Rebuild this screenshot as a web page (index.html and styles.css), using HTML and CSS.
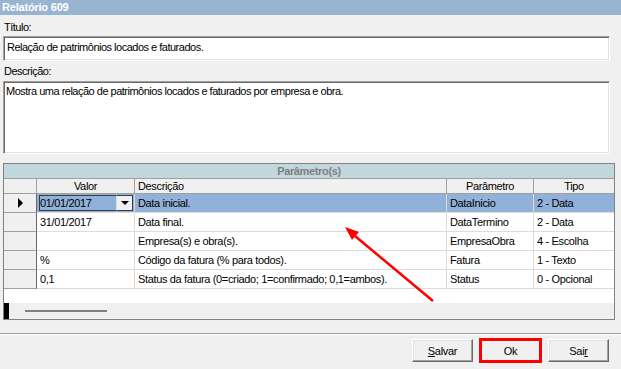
FILE: index.html
```html
<!DOCTYPE HTML>
<html>

    <head>
        <meta name="viewport" content="width=device-width, initial-scale=1">
        <title>Relatório 609</title>
        <link rel="stylesheet" href="styles.css">
    </head>

    <body>
        <div class="titlebar">Relatório 609</div>

        <div class="content">
            <div class="label">Título:</div>
            <div class="field single">Relação de patrimônios locados e faturados.</div>

            <div class="label second">Descrição:</div>
            <div class="field multi">Mostra uma relação de patrimônios locados e faturados por empresa e obra.</div>

            <div class="grid">
                <div class="band">Parâmetro(s)</div>
                <div class="row head">
                    <div class="cell ind"></div>
                    <div class="cell center">Valor</div>
                    <div class="cell">Descrição</div>
                    <div class="cell center">Parâmetro</div>
                    <div class="cell center">Tipo</div>
                </div>
                <div class="row selected">
                    <div class="cell ind"><span class="pointer"></span></div>
                    <div class="cell editor">
                        <span class="edit-text">01/01/2017</span>
                        <span class="drop"><span class="caret"></span></span>
                    </div>
                    <div class="cell">Data inicial.</div>
                    <div class="cell">DataInicio</div>
                    <div class="cell">2 - Data</div>
                </div>
                <div class="row">
                    <div class="cell ind"></div>
                    <div class="cell">31/01/2017</div>
                    <div class="cell">Data final.</div>
                    <div class="cell">DataTermino</div>
                    <div class="cell">2 - Data</div>
                </div>
                <div class="row">
                    <div class="cell ind"></div>
                    <div class="cell"></div>
                    <div class="cell">Empresa(s) e obra(s).</div>
                    <div class="cell">EmpresaObra</div>
                    <div class="cell">4 - Escolha</div>
                </div>
                <div class="row">
                    <div class="cell ind"></div>
                    <div class="cell">%</div>
                    <div class="cell">Código da fatura (% para todos).</div>
                    <div class="cell">Fatura</div>
                    <div class="cell">1 - Texto</div>
                </div>
                <div class="row">
                    <div class="cell ind"></div>
                    <div class="cell">0,1</div>
                    <div class="cell">Status da fatura (0=criado; 1=confirmado; 0,1=ambos).</div>
                    <div class="cell">Status</div>
                    <div class="cell">0 - Opcional</div>
                </div>
                <div class="blank"></div>
                <div class="hscroll">
                    <span class="mark"></span>
                    <span class="thumb"></span>
                </div>
            </div>
        </div>

        <div class="sep"></div>

        <div class="actions">
            <button class="button"><u>S</u>alvar</button>
            <button class="button ok">Ok</button>
            <button class="button">Sai<u>r</u></button>
        </div>

        <!-- annotation arrow drawn over the grid -->
        <svg class="arrow" width="621" height="369" viewBox="0 0 621 369">
            <line x1="433" y1="301" x2="355" y2="236" stroke="#f00" stroke-width="2.5" />
            <polygon points="345,227 359,232 352,240" fill="#f00" />
        </svg>
    </body>

</html>
```

FILE: styles.css
```css
html {
    font-family: "Liberation Sans", Arial, sans-serif;
    font-size: 11px;
}

body {
    margin: 0;
    width: 621px;
    height: 369px;
    background: #f0f0f0;
    color: #000;
    overflow: hidden;
    position: relative;
    letter-spacing: -0.5px;
}

.titlebar {
    height: 15px;
    line-height: 15px;
    background: #99b4d1;
    color: white;
    font-weight: bold;
    padding-left: 2px;
    letter-spacing: -0.2px;
}

.content {
    padding: 0 11px 0 3px;
}

.label {
    margin-top: 6px;
    height: 13px;
    line-height: 13px;
    padding-left: 1px;
}

.label.second {
    margin-top: 4px;
}

.field {
    margin-top: 2px;
    background: white;
    box-sizing: border-box;
    border: 1px solid;
    border-color: #a0a0a0 #fff #fff #a0a0a0;
    box-shadow: inset 1px 1px #696969, inset -1px -1px #e3e3e3;
}

.field.single {
    height: 25px;
    line-height: 17px;
    padding: 2px 3px;
}

.field.multi {
    margin-top: 3px;
    height: 73px;
    line-height: 13px;
    padding: 3px 2px;
}

.grid {
    margin-top: 9px;
    margin-right: -5px;
    border: 1px solid #828282;
    background: white;
    letter-spacing: -0.35px;
}

.band {
    height: 14px;
    line-height: 14px;
    background: #c2d6de;
    color: #808080;
    font-weight: bold;
    text-align: center;
    border-bottom: 1px solid #a0a0a0;
}

.row {
    display: grid;
    grid-template-columns: 33px 98px 312px 87px 1fr;
    height: 19px;
}

.cell {
    box-sizing: border-box;
    border-right: 1px solid #dcdcdc;
    border-bottom: 1px solid #dcdcdc;
    padding: 0 3px;
    line-height: 18px;
    white-space: nowrap;
    overflow: hidden;
}

.cell:last-child {
    border-right: none;
}

.cell.center {
    text-align: center;
}

.row.head {
    height: 15px;
}

.row.head .cell {
    background: #f0f0f0;
    line-height: 14px;
    border-right-color: #a0a0a0;
    border-bottom-color: #a0a0a0;
}

.cell.ind {
    background: #f0f0f0;
    border-right: 1px solid #696969;
    border-bottom: 1px solid #a0a0a0;
    display: flex;
    align-items: center;
    justify-content: center;
}

.row:last-of-type .cell.ind {
    border-bottom-color: #696969;
}

.pointer {
    width: 0;
    height: 0;
    border-top: 5px solid transparent;
    border-bottom: 5px solid transparent;
    border-left: 5px solid #000;
    margin-left: 1px;
}

.row.selected .cell {
    background: #91b1d8;
}

.row.selected .cell.ind {
    background: #f0f0f0;
}

.cell.editor {
    padding: 1px 1px 1px 2px;
    display: flex;
    align-items: stretch;
}

.edit-text {
    flex: 1;
    border: 1px solid #3c3c3c;
    border-right: none;
    line-height: 15px;
    padding-left: 0;
}

.drop {
    width: 15px;
    background: #f0f0f0;
    border: 1px solid #3c3c3c;
    border-left: 1px solid #dcdcdc;
    display: flex;
    align-items: center;
    justify-content: center;
}

.caret {
    width: 0;
    height: 0;
    border-left: 4px solid transparent;
    border-right: 4px solid transparent;
    border-top: 4px solid #000;
}

.blank {
    height: 14px;
}

.hscroll {
    height: 16px;
    background: #f0f0f0;
    display: flex;
    align-items: center;
}

.mark {
    width: 5px;
    height: 16px;
    background: #000;
}

.thumb {
    width: 82px;
    height: 2px;
    margin-left: 16px;
    background: #808080;
}

.sep {
    margin-top: 13px;
    border-top: 1px solid #a0a0a0;
    border-bottom: 1px solid #fff;
}

.actions {
    display: flex;
    justify-content: flex-end;
    gap: 7px;
    padding-right: 12px;
    margin-top: 4px;
}

.button {
    width: 61px;
    height: 23px;
    padding: 0;
    font-family: inherit;
    font-size: 11px;
    letter-spacing: -0.3px;
    color: #000;
    background: #f0f0f0;
    border: 1px solid;
    border-color: #fff #696969 #696969 #fff;
    box-shadow: inset -1px -1px #a0a0a0, inset 1px 1px #e3e3e3;
}

.button.ok {
    outline: 3px solid #f00;
    outline-offset: -2px;
}

.arrow {
    position: absolute;
    left: 0;
    top: 0;
    pointer-events: none;
}
```
